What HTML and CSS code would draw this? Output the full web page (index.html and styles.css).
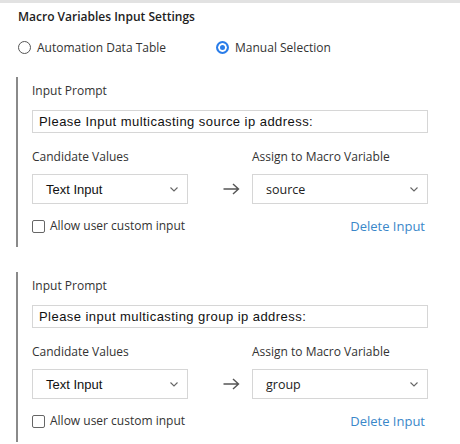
FILE: index.html
```html
<!DOCTYPE html>
<html lang="en">
<head>
<meta charset="UTF-8" />
<title>Macro Variables Input Settings</title>
<link rel="stylesheet" href="styles.css">
</head>
<body>

<div class="topbar"></div>

<div class="panel">
  <h4 class="title">Macro Variables Input Settings</h4>

  <div class="modes">
    <label class="radio"><span class="dot"></span>Automation Data Table</label>
    <label class="radio on"><span class="dot"></span>Manual Selection</label>
  </div>

  <div class="input-block">
    <div class="lbl">Input Prompt</div>
    <div class="prompt">Please Input multicasting source ip address:</div>
    <div class="row">
      <div class="col">
        <div class="lbl">Candidate Values</div>
        <div class="select sys">Text Input<svg class="chev" width="8" height="5" viewBox="0 0 8 5"><path d="M0.5 0.5l3.5 3.5 3.5-3.5" fill="none" stroke="#666" stroke-width="1.1"/></svg></div>
      </div>
      <div class="arrow"><svg width="17" height="12" viewBox="0 0 17 12"><path d="M0.5 6h15M10 1l5.5 5-5.5 5" fill="none" stroke="#555" stroke-width="1.4"/></svg></div>
      <div class="col wide">
        <div class="lbl">Assign to Macro Variable</div>
        <div class="select">source<svg class="chev" width="8" height="5" viewBox="0 0 8 5"><path d="M0.5 0.5l3.5 3.5 3.5-3.5" fill="none" stroke="#666" stroke-width="1.1"/></svg></div>
      </div>
    </div>
    <div class="foot">
      <label class="check"><span class="box"></span>Allow user custom input</label>
      <a href="#" class="del">Delete Input</a>
    </div>
  </div>

  <div class="input-block">
    <div class="lbl">Input Prompt</div>
    <div class="prompt">Please input multicasting group ip address:</div>
    <div class="row">
      <div class="col">
        <div class="lbl">Candidate Values</div>
        <div class="select sys">Text Input<svg class="chev" width="8" height="5" viewBox="0 0 8 5"><path d="M0.5 0.5l3.5 3.5 3.5-3.5" fill="none" stroke="#666" stroke-width="1.1"/></svg></div>
      </div>
      <div class="arrow"><svg width="17" height="12" viewBox="0 0 17 12"><path d="M0.5 6h15M10 1l5.5 5-5.5 5" fill="none" stroke="#555" stroke-width="1.4"/></svg></div>
      <div class="col wide">
        <div class="lbl">Assign to Macro Variable</div>
        <div class="select">group<svg class="chev" width="8" height="5" viewBox="0 0 8 5"><path d="M0.5 0.5l3.5 3.5 3.5-3.5" fill="none" stroke="#666" stroke-width="1.1"/></svg></div>
      </div>
    </div>
    <div class="foot">
      <label class="check"><span class="box"></span>Allow user custom input</label>
      <a href="#" class="del">Delete Input</a>
    </div>
  </div>
</div>

</body>
</html>
```

FILE: styles.css
```css
body {
  margin: 0;
  background: #fff;
  color: #333;
  font-family: "Open Sans", Arial, sans-serif;
  font-size: 12px;
}
.topbar {
  height: 3px;
  background: #e2e2e2;
}
.panel {
  padding: 0 32px 0 18px;
}
.title {
  margin: 0;
  padding-top: 6px;
  font-size: 12px;
  font-weight: 600;
  line-height: 16px;
  color: #222;
}
.modes {
  display: flex;
  margin-top: 13px;
  height: 18px;
  align-items: center;
}
.radio {
  display: flex;
  align-items: center;
  gap: 6px;
  color: #333;
}
.radio + .radio {
  margin-left: 50px;
}
.radio .dot {
  width: 13px;
  height: 13px;
  border: 1px solid #555;
  border-radius: 50%;
  box-sizing: border-box;
}
.radio.on .dot {
  border: 2px solid #2a7de9;
  background: #2a7de9;
  box-shadow: inset 0 0 0 2px #fff;
}
.input-block {
  margin-top: 21px;
  margin-left: -2px;
  border-left: 2px solid #8a8a8a;
  padding: 6px 0 13px 14px;
}
.input-block + .input-block {
  margin-top: 25px;
}
.lbl {
  line-height: 16px;
  color: #333;
}
.prompt {
  margin-top: 11px;
  height: 21px;
  line-height: 21px;
  border: 1px solid #d6d6d6;
  padding: 0 6px;
  font-family: "Liberation Sans", Arial, sans-serif;
  font-size: 13px;
  letter-spacing: 0.45px;
  color: #111;
}
.row {
  display: flex;
  align-items: flex-end;
  margin-top: 16px;
}
.col {
  width: 156px;
}
.col.wide {
  flex: 1;
}
.select {
  margin-top: 9px;
  height: 28px;
  border: 1px solid #d6d6d6;
  display: flex;
  align-items: center;
  justify-content: space-between;
  padding: 0 9px 0 13px;
  font-size: 12.5px;
  color: #222;
}
.select.sys {
  font-family: "Liberation Sans", Arial, sans-serif;
  font-size: 13px;
  color: #111;
}
.arrow {
  width: 64px;
  height: 30px;
  display: flex;
  align-items: center;
  padding-left: 35px;
  box-sizing: border-box;
}
.foot {
  display: flex;
  justify-content: space-between;
  align-items: center;
  margin-top: 14px;
  line-height: 16px;
}
.check {
  display: flex;
  align-items: center;
  gap: 5px;
}
.check .box {
  width: 13px;
  height: 13px;
  border: 1px solid #666;
  border-radius: 2px;
  box-sizing: border-box;
}
.del {
  color: #3a87c9;
  text-decoration: none;
  font-size: 13px;
  margin-right: 3px;
}
```
